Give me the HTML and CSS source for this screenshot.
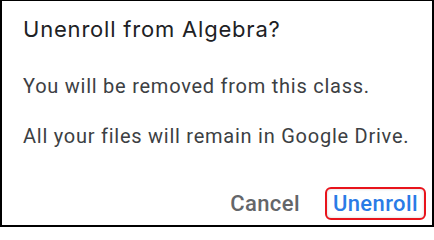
FILE: index.html
```html
<!DOCTYPE html>
<html>
<head>
<meta charset="utf-8">
<link rel="stylesheet" href="styles.css">
</head>
<body>
<div class="dialog">
  <h1 class="title">Unenroll from Algebra?</h1>
  <p class="text">You will be removed from this class.</p>
  <p class="text">All your files will remain in Google Drive.</p>
  <div class="actions">
    <button class="btn cancel">Cancel</button>
    <button class="btn confirm">Unenroll</button>
  </div>
</div>
</body>
</html>
```
FILE: styles.css
```css
html, body { margin: 0; padding: 0; background: #fff; }
.dialog {
  box-sizing: border-box;
  width: 434px;
  height: 227px;
  border-left: 2px solid #000;
  border-top: 1px solid #000;
  border-right: 2px solid #000;
  border-bottom: 2px solid #000;
  padding: 14px 0 0 21px;
  font-family: Roboto, "Noto Sans", sans-serif;
  display: flex;
  flex-direction: column;
}
.title {
  margin: 0;
  font-family: Inter, "Open Sans", sans-serif;
  font-weight: 400;
  font-size: 22px;
  line-height: 28px;
  letter-spacing: 0.8px;
  color: #202124;
}
.text {
  margin: 0;
  font-size: 20px;
  line-height: 24px;
  letter-spacing: 0.75px;
  color: #3c4043;
}
.title + .text { margin-top: 31px; }
.text + .text { margin-top: 26px; }
.actions {
  display: flex;
  justify-content: flex-end;
  align-items: center;
  gap: 17px;
  margin-top: auto;
  margin-bottom: 5px;
  padding-right: 6px;
}
.btn {
  font-family: Roboto, sans-serif;
  font-size: 22px;
  font-weight: 500;
  letter-spacing: 0.4px;
  background: none;
  border: 2px solid transparent;
  border-radius: 6px;
  padding: 2px 6px;
  line-height: 25px;
  cursor: pointer;
}
.cancel { color: #646669; }
.confirm {
  color: #2a7be6;
  border-color: #e8141c;
  box-shadow: inset 0 0 3px rgba(0, 0, 0, 0.18);
}
```
